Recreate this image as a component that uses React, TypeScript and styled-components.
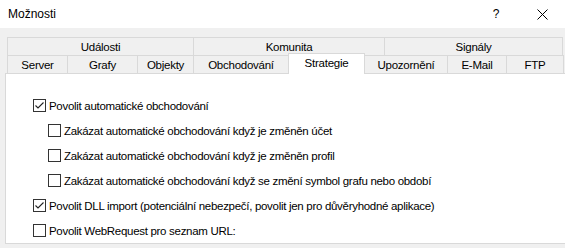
import styled, { createGlobalStyle } from 'styled-components';

const GlobalStyle = createGlobalStyle`
  html, body {
    margin: 0;
    padding: 0;
  }
  body {
    font-family: 'Liberation Sans', Arial, sans-serif;
    font-size: 11px;
    color: #000;
  }
`;

const Window = styled.div`
  width: 565px;
  height: 248px;
  background: #f0f0f0;
  overflow: hidden;
  display: flex;
  flex-direction: column;
`;

const TitleBar = styled.div`
  height: 28px;
  background: #fff;
  display: flex;
  align-items: center;
  padding-left: 8px;
  flex-shrink: 0;
`;

const Title = styled.div`
  flex: 1;
  font-size: 12px;
`;

const TitleButton = styled.div`
  width: 46px;
  height: 28px;
  display: flex;
  align-items: center;
  justify-content: center;
  font-size: 12px;
`;

const Body = styled.div`
  padding: 9px 0 0 5px;
`;

const TabRows = styled.div`
  margin-left: 2px;
  margin-right: 2px;
  display: flex;
  flex-direction: column;
`;

const TabRow = styled.div`
  display: flex;
  height: 18px;
`;

const Tab = styled.div<{ $w: number; $active?: boolean }>`
  box-sizing: border-box;
  width: ${(p) => p.$w}px;
  flex-shrink: 0;
  border: 1px solid #d9d9d9;
  border-bottom: none;
  margin-left: -1px;
  background: #f0f0f0;
  display: flex;
  align-items: center;
  justify-content: center;
  font-size: 11.5px;
  letter-spacing: -0.25px;
  &:first-child {
    margin-left: 0;
  }
  ${(p) =>
    p.$active &&
    `
    position: relative;
    z-index: 2;
    background: #fff;
    margin-top: -2px;
    height: 21px;
    padding-bottom: 3px;
  `}
`;

const Panel = styled.div`
  box-sizing: border-box;
  height: 171px;
  margin-right: -2px;
  background: #fff;
  border: 1px solid #d9d9d9;
  padding: 19px 0 0 27px;
  display: flex;
  flex-direction: column;
`;

const OptionRow = styled.label<{ $indent?: boolean }>`
  height: 25px;
  display: flex;
  align-items: center;
  padding-left: ${(p) => (p.$indent ? 15 : 0)}px;
  font-size: 11.5px;
  letter-spacing: -0.3px;
`;

const Box = styled.span`
  box-sizing: border-box;
  width: 13px;
  height: 13px;
  border: 1px solid #333;
  background: #fff;
  display: flex;
  align-items: center;
  justify-content: center;
  margin-right: 3px;
  flex-shrink: 0;
`;

const Check = ({ checked }: { checked?: boolean }) => (
  <Box>
    {checked && (
      <svg width="11" height="11" viewBox="0 0 11 11">
        <path d="M1.5 5.5 L4 8 L9.5 2.5" fill="none" stroke="#222" strokeWidth="1.1" />
      </svg>
    )}
  </Box>
);

const topTabs = [
  { label: 'Události', w: 187 },
  { label: 'Komunita', w: 192 },
  { label: 'Signály', w: 179 },
];

const bottomTabs = [
  { label: 'Server', w: 61 },
  { label: 'Grafy', w: 71 },
  { label: 'Objekty', w: 57 },
  { label: 'Obchodování', w: 96 },
  { label: 'Strategie', w: 77, active: true },
  { label: 'Upozornění', w: 84 },
  { label: 'E-Mail', w: 60 },
  { label: 'FTP', w: 58 },
];

const options = [
  { label: 'Povolit automatické obchodování', checked: true },
  { label: 'Zakázat automatické obchodování když je změněn účet', indent: true },
  { label: 'Zakázat automatické obchodování když je změněn profil', indent: true },
  { label: 'Zakázat automatické obchodování když se změní symbol grafu nebo období', indent: true },
  { label: 'Povolit DLL import (potenciální nebezpečí, povolit jen pro důvěryhodné aplikace)', checked: true },
  { label: 'Povolit WebRequest pro seznam URL:' },
];

const App: React.FC = () => {
  return (
    <Window>
      <GlobalStyle />
      <TitleBar>
        <Title>Možnosti</Title>
        <TitleButton>?</TitleButton>
        <TitleButton>
          <svg width="11" height="11" viewBox="0 0 11 11">
            <path d="M0.5 0.5 L10.5 10.5 M10.5 0.5 L0.5 10.5" stroke="#000" strokeWidth="1" />
          </svg>
        </TitleButton>
      </TitleBar>
      <Body>
        <TabRows>
          <TabRow>
            {topTabs.map((t) => (
              <Tab key={t.label} $w={t.w}>
                {t.label}
              </Tab>
            ))}
          </TabRow>
          <TabRow>
            {bottomTabs.map((t) => (
              <Tab key={t.label} $w={t.w} $active={t.active}>
                {t.label}
              </Tab>
            ))}
          </TabRow>
        </TabRows>
        <Panel>
          {options.map((o) => (
            <OptionRow key={o.label} $indent={o.indent}>
              <Check checked={o.checked} />
              {o.label}
            </OptionRow>
          ))}
        </Panel>
      </Body>
    </Window>
  );
};

export default App;
